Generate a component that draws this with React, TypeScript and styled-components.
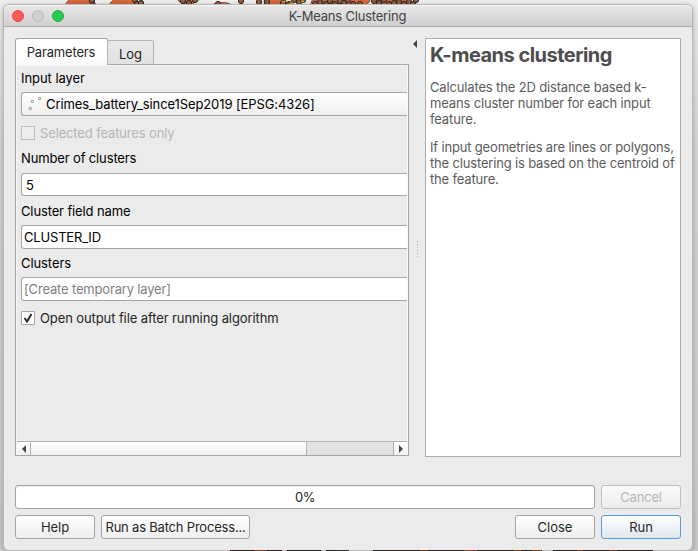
import React from 'react';
import styled, { createGlobalStyle, css } from 'styled-components';

const GlobalStyle = createGlobalStyle`
  *, *::before, *::after { box-sizing: border-box; }
  body { margin: 0; overflow: hidden; background: #cfcfcf; }
`;

const Desktop = styled.div`
  position: relative;
  width: 698px;
  height: 551px;
  padding: 5px 6px 1px 4px;
  overflow: hidden;
  background: linear-gradient(#f0f0f0 0, #e4e4e4 25px, #d2d2d2 160px, #c8c8c8 100%);
  font: 13px/16px Inter, 'Liberation Sans', sans-serif;
  color: #000;
`;

const MapStrip = styled.svg<{ $bottom?: boolean }>`
  position: absolute;
  left: 0;
  ${(p) => (p.$bottom ? 'bottom: 0;' : 'top: 0;')}
`;

const Window = styled.main`
  position: relative;
  display: flex;
  flex-direction: column;
  height: 545px;
  border-radius: 5px;
  background: #ebebeb;
  box-shadow: 0 0 0 1px #b9b9b9, 0 1px 6px rgba(0, 0, 0, 0.3);
`;

const TitleBar = styled.header`
  display: grid;
  grid-template-columns: 60px 1fr 61px;
  align-items: center;
  height: 22px;
  flex: none;
  border-bottom: 1px solid #a9a9a9;
  border-radius: 5px 5px 0 0;
  background: linear-gradient(#e8e8e8, #cfcfcf);
  box-shadow: inset 0 1px #f4f4f4;
`;

const Lights = styled.div`
  display: flex;
  gap: 8px;
  padding-left: 8px;
`;

const Light = styled.i<{ $fill: string; $rim: string }>`
  width: 12px;
  height: 12px;
  border-radius: 50%;
  border: 1px solid ${(p) => p.$rim};
  background: ${(p) => p.$fill};
`;

const Text = styled.span<{ $track?: number }>`
  white-space: nowrap;
  letter-spacing: ${(p) => p.$track ?? 0}px;
`;

const Title = styled.h1`
  margin: 0;
  font-size: 13px;
  font-weight: 400;
  text-align: center;
  color: #454545;
`;

const Body = styled.div`
  display: flex;
  flex-direction: column;
  padding: 11px 11px 0;
`;

const Split = styled.div`
  display: grid;
  grid-template-columns: 394px 16px 256px;
  height: 419px;
`;

const TabPane = styled.section`
  display: flex;
  flex-direction: column;
  height: 418px;
`;

const Tabs = styled.div`
  position: relative;
  z-index: 1;
  display: flex;
  align-items: flex-end;
  height: 27px;
  margin-bottom: -1px;
`;

const Tab = styled.div<{ $active?: boolean }>`
  display: flex;
  justify-content: center;
  border: 1px solid #a6a6a6;
  color: #262626;
  ${(p) =>
    p.$active
      ? css`
          width: 93px;
          height: 27px;
          padding: 5px 1px 0 0;
          border-bottom: 0;
          border-radius: 3px 2px 0 0;
          background: linear-gradient(#fff 60%, #f8f8f8);
        `
      : css`
          width: 47px;
          height: 25px;
          margin: 0 0 0 -1px;
          padding-top: 5px;
          border-color: #b4b4b4;
          border-bottom-color: #a6a6a6;
          border-radius: 0 2px 0 0;
          background: linear-gradient(#e9e9e9, #e1e1e1);
        `}
`;

const Frame = styled.div`
  display: flex;
  flex-direction: column;
  height: 392px;
  border: 1px solid #a6a6a6;
  box-shadow: inset 1px 1px #f6f6f6, inset -1px 0 #f9f9f9;
  padding: 0 1px 0 0;
`;

const Form = styled.div`
  display: flex;
  flex-direction: column;
  flex: 1;
  padding: 5px 0 0 5px;
`;

const Label = styled.label<{ $top?: number }>`
  display: block;
  height: 16px;
  margin-top: ${(p) => p.$top ?? 0}px;
`;

const Field = styled.div<{ $top: number; $inset?: number; $muted?: boolean; $height?: number; $combo?: boolean }>`
  display: flex;
  align-items: center;
  height: ${(p) => p.$height ?? 24}px;
  margin-top: ${(p) => p.$top}px;
  padding-left: ${(p) => p.$inset ?? 2}px;
  border: 1px solid #a4a4a4;
  border-right: 0;
  border-radius: 3px 0 0 3px;
  background: ${(p) => (p.$combo ? 'linear-gradient(#fff, #eee)' : '#fff')};
  color: ${(p) => (p.$muted ? '#7f7f7f' : '#000')};
`;

const PointsIcon = styled.svg`
  flex: none;
  margin-right: 4px;
`;

const CheckRow = styled.div<{ $top: number; $disabled?: boolean }>`
  display: flex;
  align-items: center;
  gap: 5px;
  height: 16px;
  margin-top: ${(p) => p.$top}px;
  color: ${(p) => (p.$disabled ? '#b5b5b5' : '#262626')};
`;

const CheckBox = styled.span<{ $disabled?: boolean }>`
  display: flex;
  width: 14px;
  height: 14px;
  border: 1px solid ${(p) => (p.$disabled ? '#bdbdbd' : '#a8a8a8')};
  background: ${(p) => (p.$disabled ? '#ededed' : '#fff')};
`;

const ScrollBar = styled.div`
  display: grid;
  grid-template-columns: 13px 277px 1fr 13px;
  height: 14px;
  margin-left: 1px;
  border-top: 1px solid #b2b2b2;
  background: #e2e2e2;
`;

const ScrollArrow = styled.div`
  display: flex;
  align-items: center;
  justify-content: center;
  background: linear-gradient(#fff, #f0f0f0);
`;

const Thumb = styled.div`
  border: solid #b2b2b2;
  border-width: 0 1px;
  background: linear-gradient(#fff, #f0f0f0);
`;

const Track = styled.div`
  border-right: 1px solid #b2b2b2;
`;

const Splitter = styled.div`
  display: flex;
  flex-direction: column;
  align-items: flex-start;
  padding: 2px 0 0 4px;
`;

const Grip = styled.svg`
  margin: 193px 0 0 3px;
`;

const HelpPanel = styled.aside`
  padding: 5px 0 0 4px;
  border: 1px solid #adadad;
  background: #fff;
  color: #5b5b5b;
`;

const HelpTitle = styled.h2`
  margin: 0;
  font-size: 20px;
  line-height: 22px;
  font-weight: 700;
  color: #4d4d4d;
`;

const HelpText = styled.p<{ $top: number }>`
  display: flex;
  flex-direction: column;
  margin: ${(p) => p.$top}px 0 0;
`;

const Actions = styled.footer`
  display: grid;
  grid-template-columns: 80px 149px 1fr 80px 80px;
  gap: 6px;
  margin-top: 28px;
`;

const Progress = styled.div`
  grid-column: 1 / 5;
  display: flex;
  align-items: center;
  justify-content: center;
  height: 24px;
  border: 1px solid #a2a2a2;
  border-radius: 3px;
  background: #fff;
  box-shadow: inset 0 1px #f0f0f0;
  color: #262626;
`;

const Button = styled.button<{ $primary?: boolean; $col?: number }>`
  ${(p) => p.$col && `grid-column: ${p.$col};`}
  display: flex;
  align-items: center;
  justify-content: center;
  height: 24px;
  padding: 0;
  border: 1px solid ${(p) => (p.$primary ? '#589ce0' : '#a4a4a4')};
  border-radius: 3px;
  background: ${(p) => (p.$primary ? 'linear-gradient(#fff, #e0e6ed)' : 'linear-gradient(#fff, #eee)')};
  font: inherit;
  color: #262626;
  &:disabled {
    border-color: #bebebe;
    background: linear-gradient(#fafafa, #ececec);
    color: #b7b7b7;
  }
`;

const areas: [number, number, number, number][] = [
  [79, 7, 14, 10], [124, 7, 15, 10], [188, -2, 11, 6], [222, 6, 10, 3.5], [275, 1, 11, 9], [325, 3, 14, 7], [357, 0, 13, 6], [393, 1, 18, 4],
];
const dots: [number, number][] = [
  [92, 1], [93, 5], [135, 0], [137, 4], [141, 3], [183, 1], [189, 3], [195, 0], [218, 4], [241, 1], [259, 2], [267, 2],
  [283, 3], [289, 4], [294, 0], [299, 2], [303, 0], [315, 4], [320, 2], [326, 4], [330, 1], [335, 4], [340, 1], [344, 3],
  [348, 0], [353, 4], [360, 4], [374, 1], [379, 3], [384, 0], [389, 4], [394, 3], [399, 2], [404, 4], [409, 2], [413, 4], [416, 0],
];
const bottomRuns: [number, number, string][] = [
  [230, 52, '#2b1d18'], [254, 13, '#864025'], [287, 34, '#242020'], [326, 12, '#28201d'], [336, 13, '#342c28'],
  [373, 79, '#2a201c'], [420, 8, '#713925'], [452, 48, '#2a201c'], [464, 13, '#8a4329'], [500, 42, '#2c211d'],
  [514, 7, '#8a4329'], [532, 9, '#793e28'], [553, 100, '#2a201c'], [577, 6, '#703821'], [609, 8, '#703821'],
];

export default function App() {
  return (
    <>
      <GlobalStyle />
      <Desktop>
        <MapStrip width="698" height="5">
          {areas.map(([cx, cy, rx, ry]) => (
            <ellipse key={cx} cx={cx} cy={cy} rx={rx} ry={ry} fill="#d9683f" stroke="#6b4a3b" strokeWidth="0.8" />
          ))}
          {dots.map(([cx, cy]) => (
            <circle key={`${cx}-${cy}`} cx={cx} cy={cy} r="2.6" fill="#8f6047" stroke="#2e2620" />
          ))}
          <path d="M101 4.500h4M282 1.500h3M290 3.500h4M301 1.500h3" stroke="#c9ac23" strokeWidth="1.500" />
        </MapStrip>
        <Window>
          <TitleBar>
            <Lights>
              <Light $fill="#fc5b57" $rim="#e2463f" />
              <Light $fill="#cfcfcf" $rim="#b9b9b9" />
              <Light $fill="#29cc4e" $rim="#1fae38" />
            </Lights>
            <Title><Text $track={-0.2}>K-Means Clustering</Text></Title>
          </TitleBar>
          <Body>
            <Split>
              <TabPane>
                <Tabs>
                  <Tab $active><Text $track={-0.17}>Parameters</Text></Tab>
                  <Tab><Text>Log</Text></Tab>
                </Tabs>
                <Frame>
                  <Form>
                    <Label><Text $track={-0.05}>Input layer</Text></Label>
                    <Field $top={6} $inset={6} $combo>
                      <PointsIcon width="14" height="16" fill="none" stroke="#777" strokeWidth="0.8">
                        <circle cx="4.300" cy="5.500" r="1.200" />
                        <circle cx="11.500" cy="2.500" r="1.200" />
                        <circle cx="2.300" cy="12.500" r="1.200" />
                      </PointsIcon>
                      <Text $track={-0.1}>Crimes_battery_since1Sep2019 [EPSG:4326]</Text>
                    </Field>
                    <CheckRow $top={9} $disabled>
                      <CheckBox $disabled />
                      <Text $track={-0.14}>Selected features only</Text>
                    </CheckRow>
                    <Label $top={9}><Text $track={-0.14}>Number of clusters</Text></Label>
                    <Field $top={7} $height={23} $inset={4}><Text>5</Text></Field>
                    <Label $top={7}><Text $track={-0.13}>Cluster field name</Text></Label>
                    <Field $top={6}><Text $track={-0.18}>CLUSTER_ID</Text></Field>
                    <Label $top={6}><Text $track={-0.08}>Clusters</Text></Label>
                    <Field $top={6} $muted><Text $track={-0.17}>[Create temporary layer]</Text></Field>
                    <CheckRow $top={9}>
                      <CheckBox>
                        <svg width="12" height="12" fill="none" stroke="#262626" strokeWidth="2">
                          <path d="M2.500 6l2.500 3.500L9.500 2" />
                        </svg>
                      </CheckBox>
                      <Text $track={-0.1}>Open output file after running algorithm</Text>
                    </CheckRow>
                  </Form>
                  <ScrollBar>
                    <ScrollArrow><svg width="4" height="8"><path d="M4 0v8L0 4z" fill="#444" /></svg></ScrollArrow>
                    <Thumb />
                    <Track />
                    <ScrollArrow><svg width="4" height="8"><path d="M0 0v8l4-4z" fill="#444" /></svg></ScrollArrow>
                  </ScrollBar>
                </Frame>
              </TabPane>
              <Splitter>
                <svg width="4" height="8"><path d="M4 0v8L0 4z" fill="#444" /></svg>
                <Grip width="3" height="18">
                  {[0, 3, 6, 9, 12, 15].map((y) => (
                    <rect key={y} x="1" y={y} width="1" height="1" fill="#ababab" />
                  ))}
                </Grip>
              </Splitter>
              <HelpPanel>
                <HelpTitle><Text $track={-0.52}>K-means clustering</Text></HelpTitle>
                <HelpText $top={13}>
                  <Text $track={-0.15}>Calculates the 2D distance based k-</Text>
                  <Text $track={-0.16}>means cluster number for each input</Text>
                  <Text $track={-0.14}>feature.</Text>
                </HelpText>
                <HelpText $top={12}>
                  <Text $track={-0.17}>If input geometries are lines or polygons,</Text>
                  <Text $track={-0.17}>the clustering is based on the centroid of</Text>
                  <Text $track={-0.16}>the feature.</Text>
                </HelpText>
              </HelpPanel>
            </Split>
            <Actions>
              <Progress><Text $track={-0.6}>0%</Text></Progress>
              <Button disabled><Text $track={-0.2}>Cancel</Text></Button>
              <Button><Text $track={-0.05}>Help</Text></Button>
              <Button><Text $track={-0.2}>Run as Batch Process...</Text></Button>
              <Button $col={4}><Text>Close</Text></Button>
              <Button $primary><Text>Run</Text></Button>
            </Actions>
          </Body>
        </Window>
        <MapStrip $bottom width="698" height="1">
          {bottomRuns.map(([x, w, fill]) => (
            <rect key={`${x}-${w}`} x={x} width={w} height="1" fill={fill} />
          ))}
        </MapStrip>
      </Desktop>
    </>
  );
}
